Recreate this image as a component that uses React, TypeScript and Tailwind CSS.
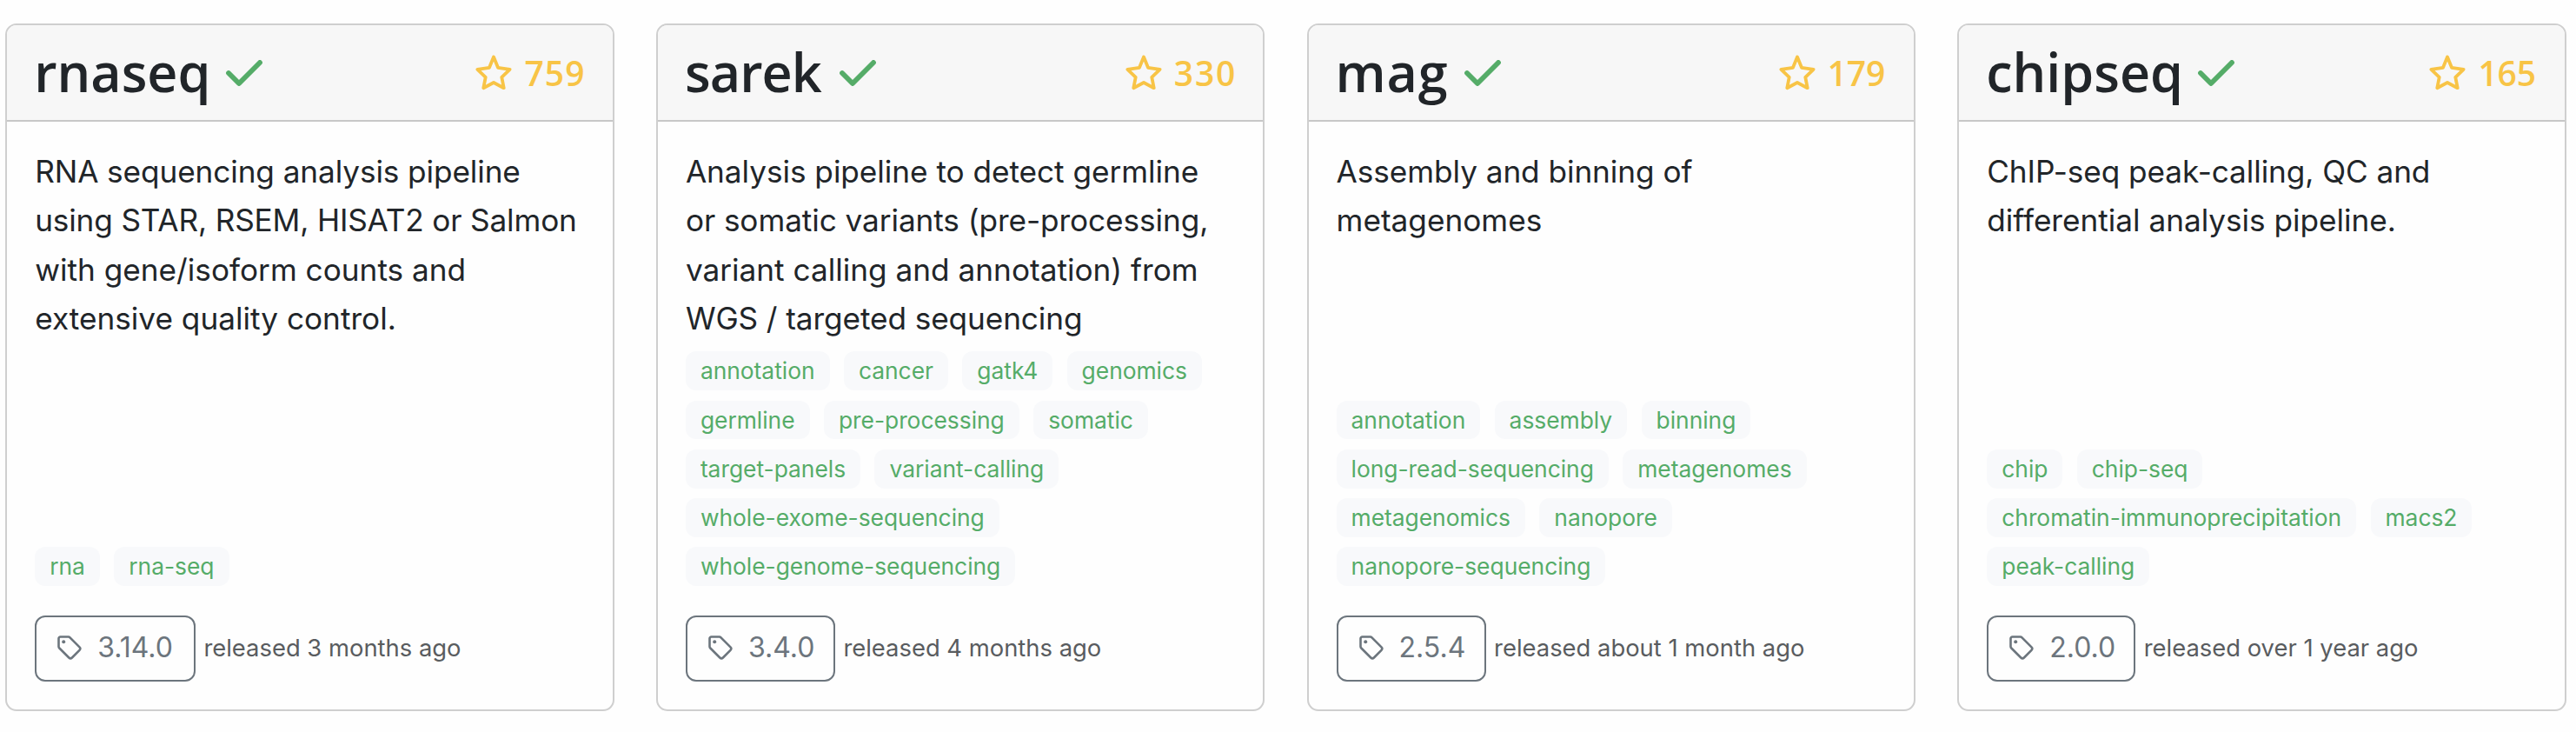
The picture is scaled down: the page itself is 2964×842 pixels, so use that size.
import React from "react";

type Line = { text: string; className?: string };

type Pipeline = {
  name: string;
  stars: number;
  lines: Line[];
  tags: string[][];
  version: string;
  released: string;
  titleClass: string;
  starsClass: string;
  versionClass: string;
};

const pipelines: Pipeline[] = [
  {
    name: "rnaseq",
    stars: 759,
    lines: [
      { text: "RNA sequencing analysis pipeline", className: "tracking-[-0.1px]" },
      { text: "using STAR, RSEM, HISAT2 or Salmon", className: "tracking-[-0.16px]" },
      { text: "with gene/isoform counts and" },
      { text: "extensive quality control." },
    ],
    tags: [["rna", "rna-seq"]],
    version: "3.14.0",
    released: "released 3 months ago",
    titleClass: "w-[202.5px]",
    starsClass: "tracking-[1.2px] -mr-[1.2px]",
    versionClass: "w-[184.7px]",
  },
  {
    name: "sarek",
    stars: 330,
    lines: [
      { text: "Analysis pipeline to detect germline", className: "tracking-[-0.04px]" },
      { text: "or somatic variants (pre-processing,", className: "tracking-[-0.08px]" },
      { text: "variant calling and annotation) from" },
      { text: "WGS / targeted sequencing", className: "tracking-[-0.1px]" },
    ],
    tags: [
      ["annotation", "cancer", "gatk4", "genomics"],
      ["germline", "pre-processing", "somatic"],
      ["target-panels", "variant-calling"],
      ["whole-exome-sequencing"],
      ["whole-genome-sequencing"],
    ],
    version: "3.4.0",
    released: "released 4 months ago",
    titleClass: "w-[160px] tracking-[-0.9px]",
    starsClass: "tracking-[1.8px] -mr-[1.8px]",
    versionClass: "w-[172px]",
  },
  {
    name: "mag",
    stars: 179,
    lines: [{ text: "Assembly and binning of", className: "tracking-[-0.06px]" }, { text: "metagenomes" }],
    tags: [
      ["annotation", "assembly", "binning"],
      ["long-read-sequencing", "metagenomes"],
      ["metagenomics", "nanopore"],
      ["nanopore-sequencing"],
    ],
    version: "2.5.4",
    released: "released about 1 month ago",
    titleClass: "w-[130.5px] tracking-[0.8px]",
    starsClass: "tracking-[-0.2px] mr-[1px]",
    versionClass: "w-[172px]",
  },
  {
    name: "chipseq",
    stars: 165,
    lines: [
      { text: "ChIP-seq peak-calling, QC and", className: "tracking-[-0.08px]" },
      { text: "differential analysis pipeline.", className: "tracking-[-0.02px]" },
    ],
    tags: [
      ["chip", "chip-seq"],
      ["chromatin-immunoprecipitation", "macs2"],
      ["peak-calling"],
    ],
    version: "2.0.0",
    released: "released over 1 year ago",
    titleClass: "w-[226px]",
    starsClass: "tracking-[-0.2px] mr-[1px]",
    versionClass: "w-[171px]",
  },
];

function Check() {
  return (
    <svg className="h-[30px] w-[42px] shrink-0" viewBox="0 0 42 30" fill="none">
      <path d="M3 15 15 27 39 3" stroke="#55ac68" strokeWidth="5.8" strokeLinecap="round" strokeLinejoin="round" />
    </svg>
  );
}

function Star() {
  return (
    <svg className="h-[41px] w-[42px] shrink-0" viewBox="0 0 42 41" fill="none">
      <path
        d="M21 2.5 26 14.8 39.6 16.8 30.3 25.8 32.7 38.2 21 32 9.3 38.2 11.7 25.8 2.4 16.8 16 14.8Z"
        stroke="#f8c446"
        strokeWidth="3.8"
        strokeLinejoin="round"
      />
    </svg>
  );
}

function Tag() {
  return (
    <svg className="-mt-[3px] h-7 w-7 shrink-0" viewBox="0 0 28 28" fill="none">
      <path
        d="M1.5 3.5a2 2 0 0 1 2-2h9.2a2.6 2.6 0 0 1 1.8.8l11 11a2.6 2.6 0 0 1 0 3.6l-8.6 8.6a2.6 2.6 0 0 1-3.6 0l-11-11a2.6 2.6 0 0 1-.8-1.8Z"
        stroke="#6c757d"
        strokeWidth="2.6"
      />
      <circle cx="7.2" cy="7.2" r="2" fill="#6c757d" />
    </svg>
  );
}

function Card({ p }: { p: Pipeline }) {
  return (
    <article className="flex h-[791px] w-[700.5px] shrink-0 flex-col overflow-hidden rounded-[13px] border-2 border-[#cfcfcf] bg-[#fefefe]">
      <header className="flex h-[111px] shrink-0 items-center justify-between border-b-2 border-[#c8c8c8] bg-[#f7f7f7] pr-[32px] pl-[31px]">
        <div className="flex items-center gap-[18px]">
          <h2
            className={`-mt-[2px] font-['Open_Sans',sans-serif] text-[61px] leading-none font-semibold whitespace-nowrap text-[#212529] ${p.titleClass}`}
          >
            {p.name}
          </h2>
          <Check />
        </div>
        <div className="flex items-center gap-[14px] font-['Open_Sans',sans-serif] text-[39px] leading-none font-semibold text-[#f8c446]">
          <Star />
          <span className={p.starsClass}>{p.stars}</span>
        </div>
      </header>
      <div className="flex min-h-0 flex-1 flex-col px-[32px] pt-[29px] pb-[32px]">
        <p className="text-[35.2px] leading-[56.25px] whitespace-nowrap text-[#212529]">
          {p.lines.map((line) => (
            <span key={line.text} className={`block ${line.className ?? ""}`}>
              {line.text}
            </span>
          ))}
        </p>
        <div className="mt-auto mb-[34px] flex flex-col gap-[11.45px]">
          {p.tags.map((row) => (
            <div key={row[0]} className="flex gap-[16.4px]">
              {row.map((tag) => (
                <span
                  key={tag}
                  className="flex h-[44.8px] items-center rounded-xl bg-[#f8f9fb] px-[17px] text-[26.4px] leading-none tracking-[-0.02px] text-[#55ac68]"
                >
                  {tag}
                </span>
              ))}
            </div>
          ))}
        </div>
        <div className="flex items-center gap-[9.5px]">
          <span
            className={`flex h-[76px] items-center gap-[18px] rounded-xl border-2 border-[#6c757d] pl-[24px] text-[32px] leading-none text-[#6c757d] ${p.versionClass}`}
          >
            <Tag />
            <span className="-mt-[2px]">{p.version}</span>
          </span>
          <span className="text-[27.4px] leading-none whitespace-nowrap text-[#595c5f]">{p.released}</span>
        </div>
      </div>
    </article>
  );
}

export default function App() {
  return (
    <main className="flex h-[842px] w-[2964px] gap-[48.2px] bg-[#fefefe] pt-[27px] pl-[6.2px] font-['Inter',sans-serif]">
      {pipelines.map((p) => (
        <Card key={p.name} p={p} />
      ))}
    </main>
  );
}
